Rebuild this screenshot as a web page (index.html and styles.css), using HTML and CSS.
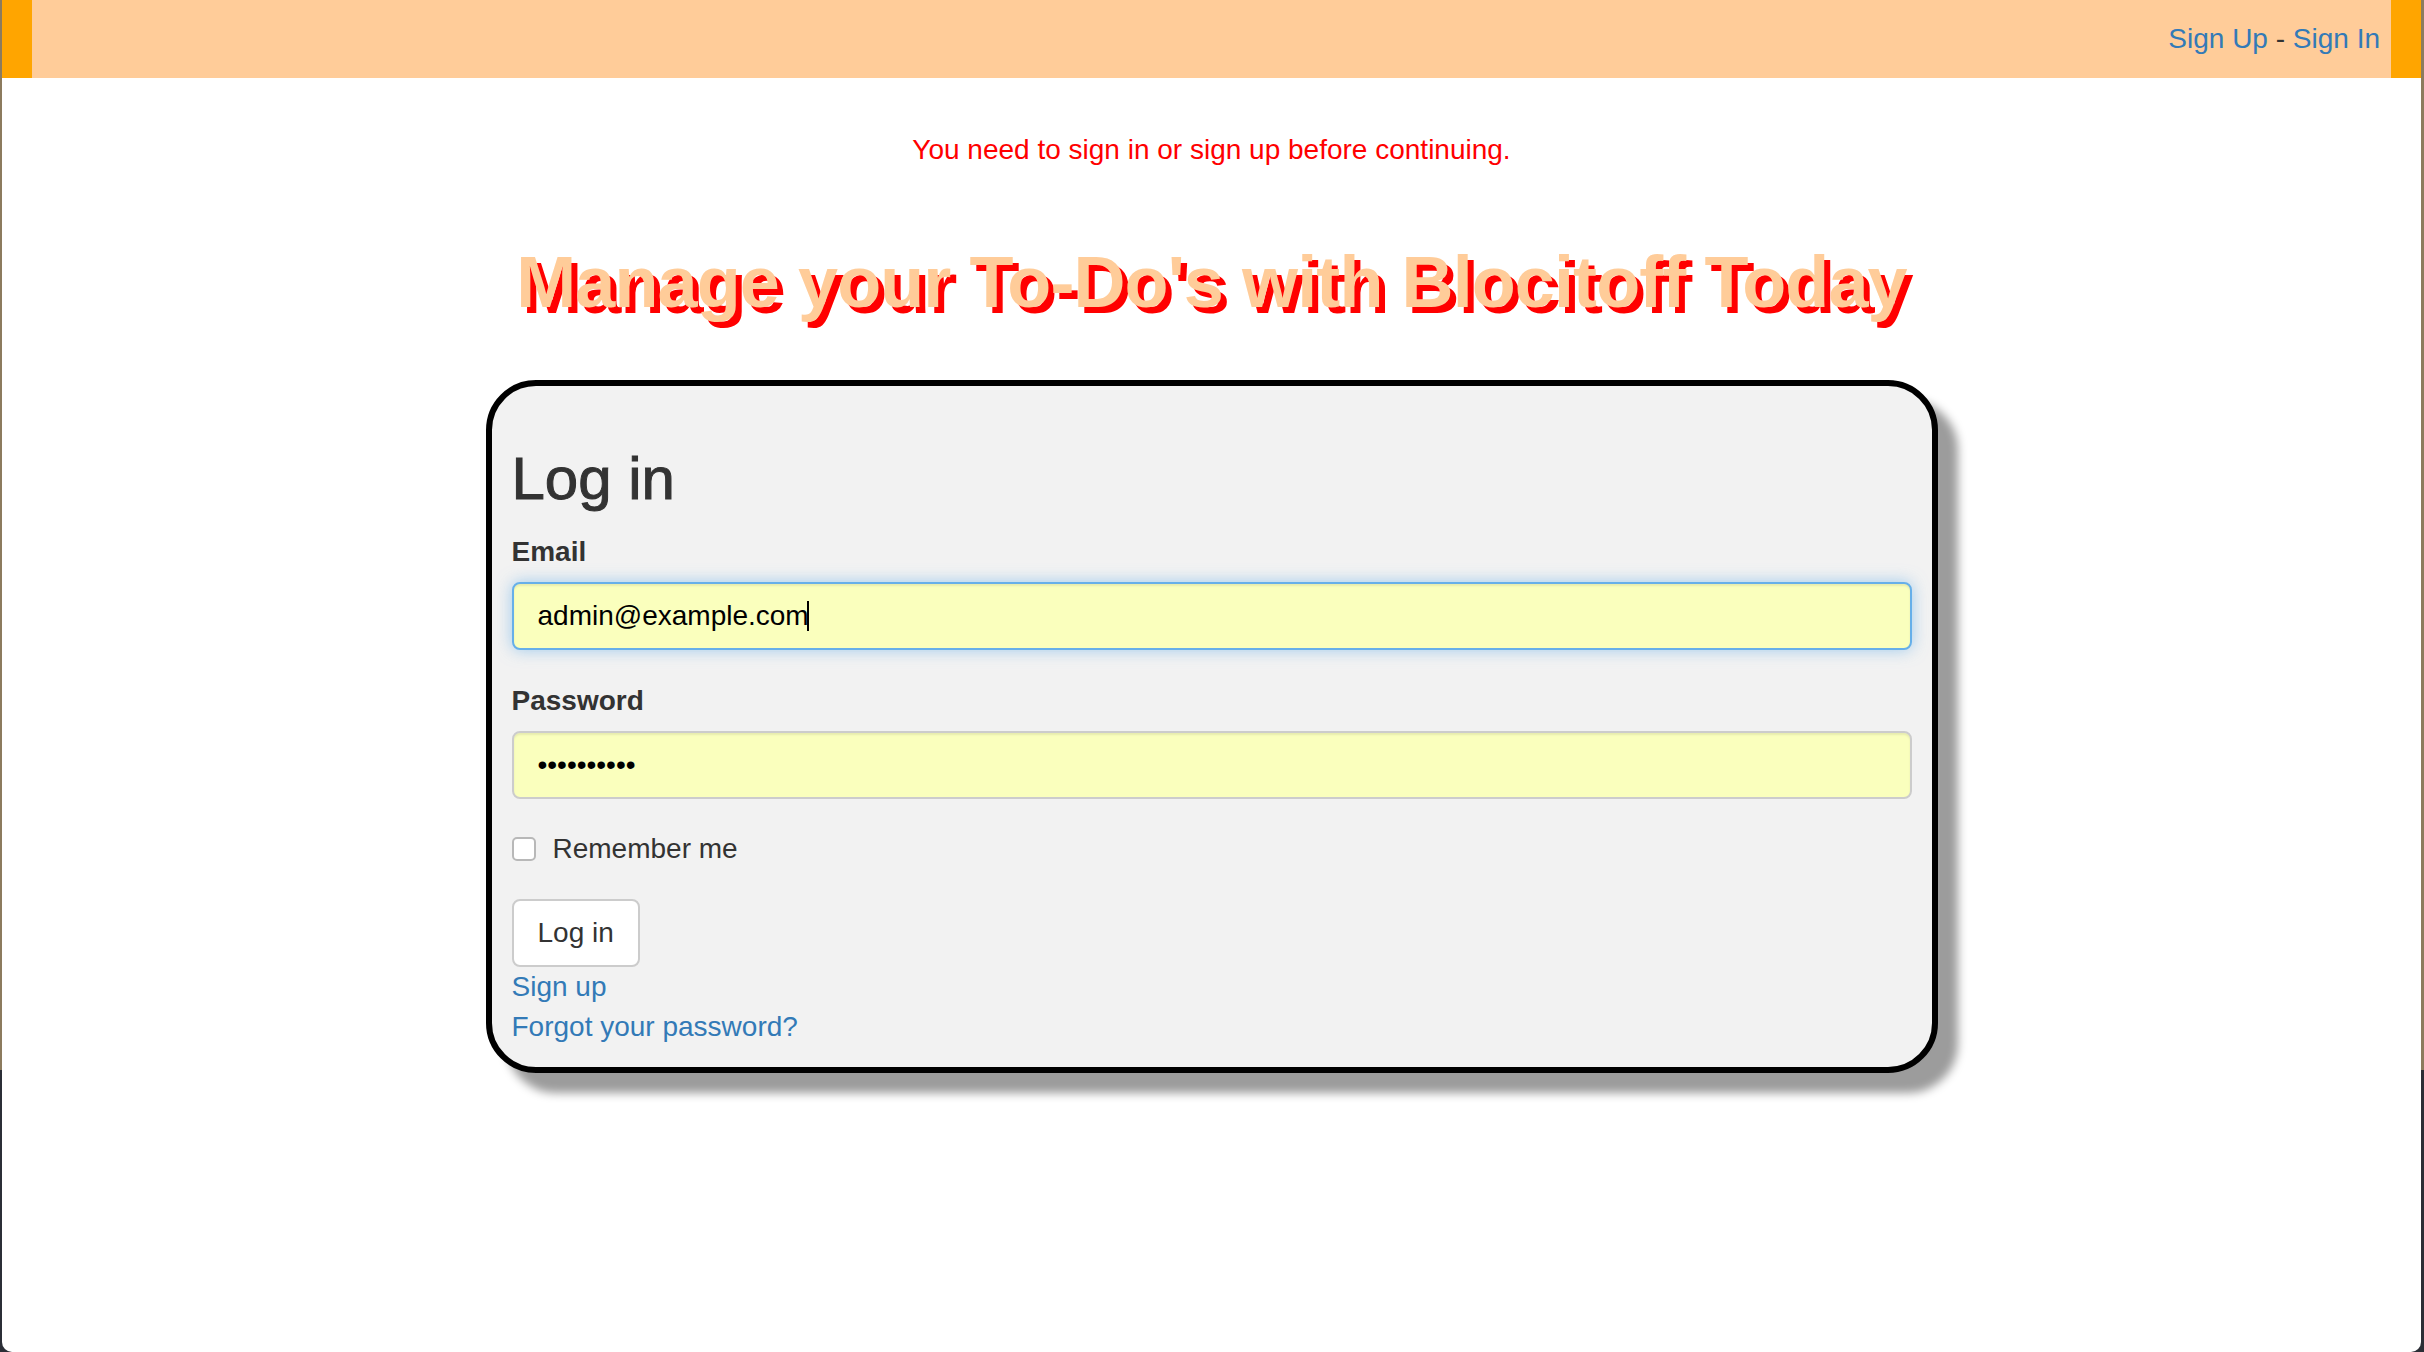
FILE: index.html
```html
<!DOCTYPE html>
<html lang="en">
<head>
<meta charset="utf-8">
<title>Blocitoff - Log in</title>
<link rel="stylesheet" href="styles.css">
</head>
<body>
<div class="window">
  <header class="topbar">
    <nav class="auth-links"><a href="#">Sign Up</a> - <a href="#">Sign In</a></nav>
  </header>

  <p class="flash">You need to sign in or sign up before continuing.</p>

  <h1 class="headline">Manage your To-Do's with Blocitoff Today</h1>

  <section class="card">
    <h2 class="card-title">Log in</h2>
    <form class="login-form" action="#">
      <div class="form-group form-group-email">
        <label class="field-label" for="email">Email</label>
        <div class="input-wrap">
          <input class="field-input is-focused" id="email" type="email" value="admin@example.com">
          <span class="caret"></span>
        </div>
      </div>
      <div class="form-group">
        <label class="field-label" for="password">Password</label>
        <input class="field-input" id="password" type="password" value="1234567890">
      </div>
      <div class="checkbox-row">
        <input class="check" id="remember" type="checkbox">
        <label class="check-label" for="remember">Remember me</label>
      </div>
      <div class="actions">
        <button class="btn" type="button">Log in</button>
      </div>
    </form>
    <div class="links">
      <a href="#">Sign up</a>
      <a href="#">Forgot your password?</a>
    </div>
  </section>
</div>
</body>
</html>
```

FILE: styles.css
```css
html {
  background: linear-gradient(to bottom, #8c7b5e 0, #8c7b5e 1070px, #2b2e36 1070px);
  min-height: 100%;
}

body {
  margin: 0;
  font-family: "Liberation Sans", Arial, Helvetica, sans-serif;
  font-size: 28px;
  line-height: 40px;
  color: #333;
}

a {
  color: #337ab7;
  text-decoration: none;
}

.window {
  margin: 0 3px 0 2px;
  min-height: 1352px;
  background: #fff;
  border-bottom-left-radius: 10px;
  border-bottom-right-radius: 10px;
  overflow: hidden;
}

/* header */
.topbar {
  height: 78px;
  box-sizing: border-box;
  background: #ffcc99;
  border-left: 30px solid #ffa500;
  border-right: 30px solid #ffa500;
  display: flex;
  align-items: center;
  justify-content: flex-end;
  padding-right: 11px;
}

.auth-links {
  color: #333;
  line-height: 40px;
}

/* flash */
.flash {
  margin: 52px 0 0;
  text-align: center;
  color: #ff0000;
}

/* headline */
.headline {
  margin: 73px 0 58px;
  text-align: center;
  font-size: 72px;
  line-height: 79px;
  font-weight: 700;
  letter-spacing: -0.9px;
  color: #ffcc99;
  text-shadow: 6px 6px 0 #ff0000;
}

/* card */
.card {
  width: 1452px;
  box-sizing: border-box;
  margin: 0 auto;
  padding: 20px;
  border: 6px solid #000;
  border-radius: 50px;
  background: #f2f2f2;
  box-shadow: 20px 20px 10px #9c9c9c;
}

.card-title {
  margin: 40px 0 20px;
  font-size: 60px;
  line-height: 66px;
  font-weight: 500;
  color: #333;
  -webkit-text-stroke: 1px #333;
}

.form-group {
  margin-bottom: 30px;
}

.form-group-email {
  margin-bottom: 31px;
}

.field-label {
  display: block;
  margin-bottom: 10px;
  font-weight: 700;
}

.input-wrap {
  position: relative;
}

.field-input {
  display: block;
  width: 100%;
  height: 68px;
  box-sizing: border-box;
  padding: 12px 24px;
  border: 2px solid #ccc;
  border-radius: 8px;
  background: #faffbd;
  color: #000;
  font-family: "Liberation Sans", Arial, Helvetica, sans-serif;
  font-size: 28px;
  box-shadow: inset 0 2px 2px rgba(0, 0, 0, 0.075);
  outline: none;
}

.field-input.is-focused {
  border-color: #66afe9;
  box-shadow: inset 0 2px 2px rgba(0, 0, 0, 0.075), 0 0 16px rgba(102, 175, 233, 0.6);
}

.caret {
  position: absolute;
  left: 295px;
  top: 19px;
  width: 2px;
  height: 30px;
  background: #000;
}

.checkbox-row {
  display: flex;
  align-items: flex-start;
  height: 40px;
}

.check {
  appearance: none;
  -webkit-appearance: none;
  width: 24px;
  height: 24px;
  margin: 8px 17px 0 0;
  box-sizing: border-box;
  border: 2px solid #b8b8b8;
  border-radius: 5px;
  background: #fff;
}

.check-label {
  font-weight: 400;
}

.actions {
  margin-top: 30px;
}

.btn {
  height: 68px;
  padding: 0 24px;
  border: 2px solid #ccc;
  border-radius: 8px;
  background: #fff;
  color: #333;
  font-family: "Liberation Sans", Arial, Helvetica, sans-serif;
  font-size: 28px;
  line-height: 40px;
}

.links a {
  display: block;
  width: max-content;
  line-height: 40px;
}
```
